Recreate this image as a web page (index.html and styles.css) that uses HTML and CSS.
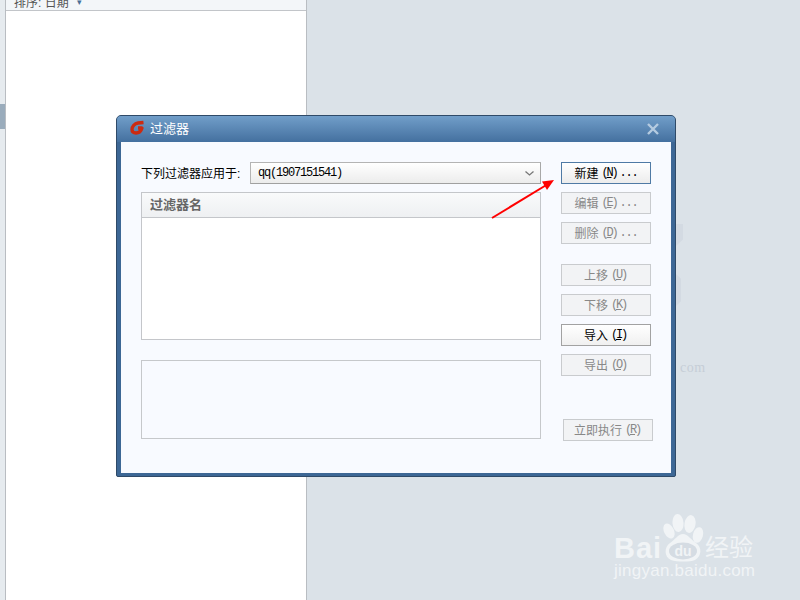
FILE: index.html
```html
<!doctype html>
<html lang="zh-CN">
<head>
	<meta charset="UTF-8">
	<title>过滤器</title>
	<link rel="stylesheet" href="styles.css">
</head>
<body>
	<div class="app">
		<div class="strip"><span class="strip-mark"></span></div>
		<div class="panel">
			<div class="panel-head"><span>排序: 日期</span><span class="panel-caret">▾</span></div>
		</div>
		<div class="rest"></div>
	</div>

	<!-- watermark behind the dialog -->
	<span class="wm-piece wm-piece1"></span>
	<span class="wm-piece wm-piece2"></span>
	<span class="wm-com">com</span>
	<div class="baidu">
		<div class="baidu-top">
			<span class="baidu-bai">Bai</span>
			<svg class="baidu-paw" width="42" height="50" viewBox="0 0 42 50">
				<ellipse cx="6" cy="17" rx="5" ry="8" fill="#f1f4f6" transform="rotate(-25 6 17)"/>
				<ellipse cx="15" cy="9" rx="5.500" ry="9" fill="#f1f4f6" transform="rotate(-5 15 9)"/>
				<ellipse cx="27" cy="10" rx="5.500" ry="9" fill="#f1f4f6" transform="rotate(10 27 10)"/>
				<ellipse cx="35" cy="21" rx="5" ry="8" fill="#f1f4f6" transform="rotate(15 35 21)"/>
				<path d="M20 20c5 0 8 6 13 9 6 4 6 13-1 17-5 2-18 2-24 0-7-3-7-13-1-17 5-3 8-9 13-9z" fill="#f1f4f6"/>
				<ellipse cx="20" cy="37" rx="14" ry="8.500" fill="#d5dce3"/>
				<text class="baidu-du" x="20" y="42" text-anchor="middle">du</text>
			</svg>
			<span class="baidu-cn">经验</span>
		</div>
		<div class="baidu-url">jingyan.baidu.com</div>
	</div>

	<div class="dialog">
		<div class="dialog-title">
			<svg class="logo" width="16" height="15" viewBox="0 0 16 15">
				<path d="M13.500 2.500L8 3C4.500 3.500 2 6.500 2 9.500 2 12 4 13 6 13c3 0 5-1.500 6-5H8" fill="none" stroke="#cc2a10" stroke-width="3.300" stroke-linejoin="round"/>
			</svg>
			<span class="dialog-name">过滤器</span>
			<svg class="close" width="12" height="12" viewBox="0 0 12 12">
				<path d="M1 1l10 10M11 1L1 11" stroke="#b5cbe0" stroke-width="2.400"/>
			</svg>
		</div>
		<div class="dialog-body">
			<div class="main">
				<div class="apply-row">
					<span class="apply-label">下列过滤器应用于:</span>
					<div class="select">
						<span class="lat">qq(1907151541)</span>
						<svg width="9" height="5" viewBox="0 0 9 5"><path d="M.5.500l4 3.500 4-3.500" fill="none" stroke="#777" stroke-width="1.300"/></svg>
					</div>
				</div>
				<div class="list">
					<div class="list-head">过滤器名</div>
				</div>
				<div class="desc"></div>
			</div>
			<div class="buttons">
				<div class="btn-group">
					<div class="btn btn-primary">新建<span class="key">(<u>N</u>)</span><span class="lat">...</span></div>
					<div class="btn">编辑<span class="key">(<u>E</u>)</span><span class="lat">...</span></div>
					<div class="btn">删除<span class="key">(<u>D</u>)</span><span class="lat">...</span></div>
				</div>
				<div class="btn-group">
					<div class="btn">上移<span class="key">(<u>U</u>)</span></div>
					<div class="btn">下移<span class="key">(<u>K</u>)</span></div>
					<div class="btn btn-active">导入<span class="key">(<u>I</u>)</span></div>
					<div class="btn">导出<span class="key">(<u>O</u>)</span></div>
				</div>
				<div class="btn btn-run">立即执行<span class="key">(<u>R</u>)</span></div>
			</div>
		</div>
	</div>

	<svg class="arrow" width="70" height="46" viewBox="0 0 70 46">
		<path d="M2 43L58 9" stroke="#f00" stroke-width="2"/>
		<path d="M64 5L52 6.500 57 15z" fill="#f00"/>
	</svg>
</body>
</html>
```
FILE: styles.css
```css
* { padding: 0; margin: 0; box-sizing: border-box; }
html, body { height: 100%; overflow: hidden; }
body { font: 12px "Liberation Sans", "Noto Sans CJK SC", sans-serif; color: #000; background: #dbe2e8; }

.app { display: flex; height: 600px; }
.strip { width: 5px; background: #e6ebef; padding-top: 104px; }
.strip-mark { display: block; height: 25px; background: #9aacbc; }
.panel { width: 302px; background: #fff; border-left: 1px solid #b9bdc2; border-right: 1px solid #b9bdc2; }
.panel-head { height: 11px; overflow: hidden; display: flex; align-items: flex-end; gap: 8px; padding: 0 0 0 8px; background: #f3f6f9; border-bottom: 1px solid #c2c5c9; color: #555; line-height: 14px; }
.panel-caret { align-self: flex-start; margin-top: -5px; color: #4a6f96; font-size: 9px; }
.rest { flex: 1; }

/* watermark */
.wm-piece { position: absolute; background: #d3dae2; }
.wm-piece1 { left: 676px; top: 224px; width: 7px; height: 22px; clip-path: polygon(0 0, 100% 0, 100% 70%, 0 100%); }
.wm-piece2 { left: 676px; top: 274px; width: 5px; height: 32px; clip-path: polygon(0 0, 100% 15%, 100% 85%, 0 100%); }
.wm-com { position: absolute; left: 680px; top: 360px; font: 14px/16px "Liberation Serif", serif; letter-spacing: 0.5px; color: #c6ced7; }
.baidu { position: absolute; left: 614px; top: 514px; color: #f1f4f6; }
.baidu-top { display: flex; align-items: flex-start; height: 50px; }
.baidu-bai { width: 49px; padding-top: 19px; font: bold 29px/30px "Liberation Sans", sans-serif; letter-spacing: 1px; }
.baidu-paw { flex: none; }
.baidu-du { font: bold 14px "Liberation Sans", sans-serif; fill: #f1f4f6; }
.baidu-cn { padding-top: 16px; font: 24px/32px "Noto Sans CJK SC", sans-serif; }
.baidu-url { font: 17px/14px "Liberation Sans", sans-serif; letter-spacing: 0.25px; }

/* dialog */
.dialog { position: absolute; left: 116px; top: 115px; width: 560px; height: 362px; display: flex; flex-direction: column; border: 1px solid #2f4a68; border-radius: 5px 5px 2px 2px; background: #3d6795; padding: 0 4px 3px; }
.dialog-title { height: 26px; margin: 0 -4px; padding: 0 16px 3px 13px; display: flex; align-items: center; gap: 4px; border-radius: 4px 4px 0 0; background: linear-gradient(#719ec9, #44709f); }
.logo { flex: none; }
.dialog-name { flex: 1; font-size: 13px; color: #fff; }
.close { flex: none; margin-top: 3px; }
.dialog-body { flex: 1; display: flex; gap: 20px; padding: 20px 0 0 20px; background: #f8faff; }

.main { width: 400px; display: flex; flex-direction: column; }
.apply-row { height: 22px; display: flex; align-items: center; justify-content: space-between; }
.apply-label { padding-bottom: 1px; }
.select { width: 291px; height: 22px; display: flex; align-items: center; justify-content: space-between; padding: 0 6px 0 7px; border: 1px solid #b4b4b4; border-right-color: #a8a8a8; border-bottom-color: #a0a0a0; background: linear-gradient(#fff, #ececec); }
.lat { font: 12px/14px "Liberation Mono", monospace; letter-spacing: -1.2px; }
.list { height: 148px; margin-top: 8px; background: #fff; border: 1px solid #c4c6ca; }
.list-head { height: 25px; padding-left: 8px; font-size: 13px; font-weight: bold; line-height: 24px; color: #666; background: linear-gradient(#f9fafb, #eef0f2); border-bottom: 1px solid #c4c6ca; }
.desc { height: 79px; margin-top: 20px; border: 1px solid #c6c8cb; }

.buttons { width: 90px; display: flex; flex-direction: column; }
.btn-group { display: flex; flex-direction: column; gap: 8px; margin-bottom: 20px; }
.btn { height: 22px; display: flex; align-items: center; justify-content: center; padding-bottom: 1px; border: 1px solid #c9cbce; background: #f2f3f5; color: #888; }
.btn-primary { border-color: #4f7aa5; background: linear-gradient(#fff, #ececec); color: #000; }
.btn-active { border-color: #a2a2a2; background: linear-gradient(#fff, #f0f0f0); color: #000; }
.btn-run { width: 90px; margin: 23px 0 0 2px; flex: none; }
.key { margin-left: 3px; font: 12px/14px "Liberation Mono", monospace; letter-spacing: -2.2px; padding-right: 2px; }
.btn .lat { margin-left: 1px; }

.arrow { position: absolute; left: 490px; top: 175px; }
```
